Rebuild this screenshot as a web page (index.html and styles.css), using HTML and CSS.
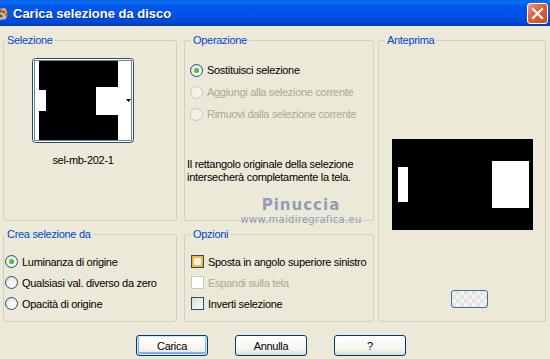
FILE: index.html
```html
<!DOCTYPE html>
<html lang="it">
<head>
    <meta charset="UTF-8">
    <title>Carica selezione da disco</title>
    <link rel="stylesheet" href="styles.css">
</head>
<body>
    <div class="titlebar">
        <svg class="app-icon" width="12" height="16" viewBox="0 0 12 16">
            <path d="M0 3 L7 2 L10 7 L8 13 L2 14 L0 12 Z" fill="#e8b27a"/>
            <circle cx="3" cy="5" r="1.6" fill="#d8312a"/>
            <circle cx="6" cy="6" r="1.4" fill="#2d7b2a"/>
            <circle cx="3" cy="10" r="1.5" fill="#2456c8"/>
            <path d="M7 9 L11 3 L12 4 L8 10 Z" fill="#7a4a1f"/>
        </svg>
        <span class="title">Carica selezione da disco</span>
        <button class="close-btn" aria-label="Chiudi">
            <svg width="13" height="13" viewBox="0 0 13 13">
                <path d="M2 2 L11 11 M11 2 L2 11" stroke="#fff" stroke-width="2.2" stroke-linecap="square"/>
            </svg>
        </button>
    </div>

    <div class="content">
        <fieldset class="group group-sel">
            <legend class="legend legend-left">Selezione</legend>
            <div class="thumb">
                <svg width="102" height="85" viewBox="0 0 102 85">
                    <rect x="0.5" y="0.5" width="101" height="84" rx="3" fill="#fff" stroke="#1c5180"/>
                    <rect x="2.5" y="2.5" width="97" height="80" fill="none" stroke="#000" stroke-dasharray="1 1"/>
                    <rect x="7" y="3" width="79" height="79" fill="#000"/>
                    <rect x="7" y="32" width="7" height="21" fill="#fff"/>
                    <rect x="64" y="29" width="22" height="28" fill="#fff"/>
                    <rect x="86" y="3" width="10" height="79" fill="#fff"/>
                    <path d="M94 41 L99 41 L96.5 44 Z" fill="#000"/>
                </svg>
            </div>
            <div class="thumb-name">sel-mb-202-1</div>
        </fieldset>

        <fieldset class="group group-op">
            <legend class="legend">Operazione</legend>
            <div class="option-list op-list">
                <label class="option">
                    <span class="radio checked"></span>Sostituisci selezione
                </label>
                <label class="option disabled">
                    <span class="radio"></span>Aggiungi alla selezione corrente
                </label>
                <label class="option disabled">
                    <span class="radio"></span>Rimuovi dalla selezione corrente
                </label>
            </div>
            <p class="info">Il rettangolo originale della selezione<br>intersecherà completamente la tela.</p>
            <div class="watermark">
                <span class="wm-name">Pinuccia</span>
                <span class="wm-site">www.maidiregrafica.eu</span>
            </div>
        </fieldset>

        <fieldset class="group group-preview">
            <legend class="legend">Anteprima</legend>
            <div class="preview">
                <svg width="141" height="91" viewBox="0 0 141 91">
                    <rect width="141" height="91" fill="#000"/>
                    <rect x="6" y="28" width="10" height="35" fill="#fff"/>
                    <rect x="100" y="22" width="37" height="47" fill="#fff"/>
                </svg>
            </div>
            <button class="bg-btn" aria-label="Sfondo"></button>
        </fieldset>

        <fieldset class="group group-crea">
            <legend class="legend legend-left">Crea selezione da</legend>
            <div class="option-list crea-list">
                <label class="option">
                    <span class="radio checked"></span>Luminanza di origine
                </label>
                <label class="option">
                    <span class="radio"></span>Qualsiasi val. diverso da zero
                </label>
                <label class="option">
                    <span class="radio"></span>Opacità di origine
                </label>
            </div>
        </fieldset>

        <fieldset class="group group-opz">
            <legend class="legend">Opzioni</legend>
            <div class="option-list opz-list">
                <label class="option">
                    <span class="check hover"></span>Sposta in angolo superiore sinistro
                </label>
                <label class="option disabled">
                    <span class="check"></span>Espandi sulla tela
                </label>
                <label class="option">
                    <span class="check"></span>Inverti selezione
                </label>
            </div>
        </fieldset>
    </div>

    <div class="buttons">
        <button class="btn btn-default">Carica</button>
        <button class="btn">Annulla</button>
        <button class="btn">?</button>
    </div>
</body>
</html>
```

FILE: styles.css
```css
body {
    margin: 0;
    width: 550px;
    height: 359px;
    overflow: hidden;
    background-color: #ece9d8;
    font-family: "Liberation Sans", Arial, sans-serif;
    font-size: 11px;
    letter-spacing: -0.3px;
    color: #000;
}

/* title bar */
.titlebar {
    height: 26px;
    display: flex;
    align-items: center;
    background: linear-gradient(to bottom, #0a5fd8 0%, #0a72f3 8%, #0058ee 20%, #0052e6 60%, #0048d4 85%, #003db8 100%);
}

.app-icon {
    margin-left: -2px;
    margin-top: 1px;
}

.title {
    margin-left: 3px;
    color: #fff;
    font-weight: bold;
    font-size: 13px;
    letter-spacing: 0;
    text-shadow: 1px 1px 0 #0a2a8a;
}

.close-btn {
    margin-left: auto;
    margin-right: 2px;
    width: 21px;
    height: 21px;
    padding: 0;
    display: flex;
    align-items: center;
    justify-content: center;
    border: 1px solid #fff;
    border-radius: 3px;
    background: linear-gradient(135deg, #f0a080 0%, #e2663f 35%, #cc4a22 100%);
}

/* group boxes */
.content {
    display: grid;
    grid-template-columns: 174px 197px 172px;
    grid-template-rows: 187px 94px;
    row-gap: 7px;
    padding: 8px 0 0 3px;
}

.group {
    margin: 0;
    padding: 0;
    min-width: 0;
    border: 1px solid #d0d0bf;
    border-radius: 3px;
    position: relative;
}

.group-op,
.group-opz {
    margin-left: 7px;
}

.legend {
    padding: 0 2px;
    margin-left: 6px;
    color: #0046d5;
    line-height: 13px;
}

.legend-left {
    margin-left: 1px;
}

.group-preview {
    grid-column: 3;
    grid-row: 1 / span 2;
    margin-left: 4px;
    display: flex;
    flex-direction: column;
    align-items: center;
}

.group-crea {
    grid-column: 1;
    grid-row: 2;
}

.group-opz {
    grid-column: 2;
    grid-row: 2;
}

/* selezione */
.thumb {
    margin: 11px 0 0 28px;
    height: 85px;
}

.thumb-name {
    width: 102px;
    margin: 11px 0 0 28px;
    text-align: center;
    line-height: 13px;
}

/* options */
.option-list {
    display: flex;
    flex-direction: column;
}

.option {
    display: flex;
    align-items: center;
    gap: 4px;
    white-space: nowrap;
}

.op-list {
    padding: 12px 0 0 5px;
}

.op-list .option {
    height: 22px;
}

.crea-list {
    padding: 10px 0 0 1px;
}

.opz-list {
    padding: 10px 0 0 6px;
}

.crea-list .option,
.opz-list .option {
    height: 21px;
}

.disabled {
    color: #aca899;
}

.radio {
    width: 11px;
    height: 11px;
    border: 1px solid #1c5180;
    border-radius: 50%;
    background: radial-gradient(circle at 65% 65%, #ffffff 0%, #f4f3ee 40%, #d8d7cd 100%);
    position: relative;
    flex: none;
}

.radio.checked::after {
    content: "";
    position: absolute;
    left: 3px;
    top: 3px;
    width: 5px;
    height: 5px;
    border-radius: 50%;
    background: radial-gradient(circle at 40% 40%, #5ed25e, #21a121);
}

.disabled .radio {
    border-color: #cac8bb;
    background: #f3f2ea;
}

.check {
    width: 11px;
    height: 11px;
    border: 1px solid #1c5180;
    background: linear-gradient(135deg, #dcdbd2, #fdfdfb);
    flex: none;
}

.check.hover {
    box-shadow: inset 0 0 0 2px #f8b636;
    background: #fcf5e0;
}

.disabled .check {
    border-color: #cac8bb;
    background: #fff;
}

.info {
    margin: 33px 0 0 2px;
    line-height: 13px;
}

/* watermark overlay */
.watermark {
    position: absolute;
    left: 46px;
    top: 150px;
    width: 140px;
    display: flex;
    flex-direction: column;
    align-items: center;
    color: #949cb6;
    pointer-events: none;
}

.wm-name {
    font-family: "DejaVu Sans", sans-serif;
    font-weight: bold;
    font-size: 15px;
    letter-spacing: 1px;
    line-height: 16px;
}

.wm-site {
    font-family: "DejaVu Sans", sans-serif;
    font-size: 10px;
    letter-spacing: 0.3px;
    line-height: 12px;
    margin-top: 1px;
}

/* anteprima */
.preview {
    margin-top: 92px;
    height: 91px;
}

.bg-btn {
    margin: 60px 0 0 15px;
    width: 37px;
    height: 18px;
    border: 1px solid #3a6ea5;
    border-radius: 3px;
    background-color: #f4f4f2;
    background-image:
        linear-gradient(45deg, #e2e2e2 25%, transparent 25%, transparent 75%, #e2e2e2 75%),
        linear-gradient(45deg, #e2e2e2 25%, transparent 25%, transparent 75%, #e2e2e2 75%);
    background-size: 8px 8px;
    background-position: 0 0, 4px 4px;
}

/* bottom buttons */
.buttons {
    display: flex;
    gap: 27px;
    padding: 13px 0 0 136px;
}

.btn {
    width: 72px;
    height: 21px;
    padding: 0;
    border: 1px solid #003c74;
    border-radius: 3px;
    background: linear-gradient(to bottom, #ffffff 0%, #f5f4ef 70%, #dcdad0 100%);
    font-family: "Liberation Sans", Arial, sans-serif;
    font-size: 11px;
    letter-spacing: -0.3px;
    color: #000;
}

.btn-default {
    box-shadow: inset 0 0 0 1px #cee7ff, inset 0 -1px 0 2px #89adea;
}
```
